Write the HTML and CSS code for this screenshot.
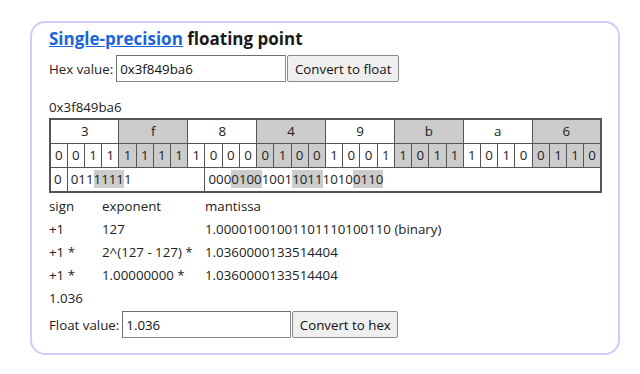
FILE: index.html
```html
<!DOCTYPE html>
<html>
<head>
<meta charset="utf-8">
<link rel="stylesheet" href="styles.css">
</head>
<body>
<div class="card">
  <h3 class="title"><a href="#">Single-precision</a> floating point</h3>
  <div class="row">
    <label class="lbl">Hex value:</label>
    <input class="inp inp-hex" value="0x3f849ba6">
    <button class="btn btn-float">Convert to float</button>
  </div>
  <div class="hexout">0x3f849ba6</div>
  <table class="bits">
    <tr class="hexrow">
      <td colspan="4">3</td><td colspan="4" class="g">f</td><td colspan="4">8</td><td colspan="4" class="g">4</td>
      <td colspan="4">9</td><td colspan="4" class="g">b</td><td colspan="4">a</td><td colspan="4" class="g">6</td>
    </tr>
    <tr class="bitrow">
      <td>0</td><td>0</td><td>1</td><td>1</td>
      <td class="g">1</td><td class="g">1</td><td class="g">1</td><td class="g">1</td>
      <td>1</td><td>0</td><td>0</td><td>0</td>
      <td class="g">0</td><td class="g">1</td><td class="g">0</td><td class="g">0</td>
      <td>1</td><td>0</td><td>0</td><td>1</td>
      <td class="g">1</td><td class="g">0</td><td class="g">1</td><td class="g">1</td>
      <td>1</td><td>0</td><td>1</td><td>0</td>
      <td class="g">0</td><td class="g">1</td><td class="g">1</td><td class="g">0</td>
    </tr>
    <tr class="fieldrow">
      <td>0</td>
      <td colspan="8">011<span class="hl">1111</span>1</td>
      <td colspan="23">000<span class="hl">0100</span>1001<span class="hl">1011</span>1010<span class="hl">0110</span></td>
    </tr>
  </table>
  <div class="calc">
    <span>sign</span><span>exponent</span><span>mantissa</span>
    <span>+1</span><span>127</span><span>1.00001001001101110100110 (binary)</span>
    <span>+1 *</span><span>2^(127 - 127) *</span><span>1.0360000133514404</span>
    <span>+1 *</span><span>1.00000000 *</span><span>1.0360000133514404</span>
  </div>
  <div class="result">1.036</div>
  <div class="row row-float">
    <label class="lbl">Float value:</label>
    <input class="inp inp-float" value="1.036">
    <button class="btn btn-hex">Convert to hex</button>
  </div>
</div>
</body>
</html>
```

FILE: styles.css
```css
html, body {
  margin: 0;
  padding: 0;
  background: #ffffff;
}
body {
  padding: 21px 0 0 30px;
  font-family: "Open Sans", "Noto Sans", sans-serif;
  font-size: 13.3px;
  color: #222222;
}
.card {
  box-sizing: border-box;
  width: 590px;
  height: 334px;
  border: 2px solid #cdcdf3;
  border-radius: 15px;
  padding: 5px 17px 0 17px;
}
.title {
  margin: 0;
  font-size: 17px;
  line-height: 22px;
  font-weight: bold;
  color: #1a1a1a;
}
.title a {
  color: #1a66d9;
  text-decoration: underline;
}
.row {
  display: flex;
  align-items: stretch;
  height: 27px;
  margin-top: 5px;
}
.lbl {
  display: flex;
  align-items: center;
  margin-right: 3px;
}
.inp {
  box-sizing: border-box;
  height: 27px;
  border: 1px solid #8a8a8a;
  border-top-color: #6e6e6e;
  border-left-color: #6e6e6e;
  padding: 0 3px;
  font-family: inherit;
  font-size: 13.3px;
  color: #111;
  margin: 0;
}
.inp-hex { width: 170px; }
.inp-float { width: 169px; }
.btn {
  box-sizing: border-box;
  height: 27px;
  margin: 0 0 0 1px;
  padding: 0 6px;
  background: #efefef;
  border: 1px solid #8a8a8a;
  border-radius: 2px;
  font-family: inherit;
  font-size: 13.3px;
  color: #111;
}
.btn-float { width: 112px; }
.btn-hex { width: 106px; }
.hexout {
  margin-top: 16px;
  line-height: 19px;
}
.bits {
  margin-top: 1px;
  width: 553px;
  table-layout: fixed;
  border-collapse: collapse;
  border: 2px solid #555555;
}
.bits td {
  border: 1px solid #555555;
  padding: 0;
  height: 23px;
  line-height: 23px;
}
.hexrow td, .bitrow td {
  text-align: center;
}
.g {
  background: #cccccc;
}
.fieldrow td {
  text-align: left;
  padding-left: 3px;
}
.hl {
  background: #cccccc;
}
.calc {
  margin-top: 4px;
  display: grid;
  grid-template-columns: 53px 103px auto;
  row-gap: 4px;
  line-height: 19px;
}
.result {
  margin-top: 4px;
  line-height: 19px;
}
.row-float {
  margin-top: 3px;
}
```
